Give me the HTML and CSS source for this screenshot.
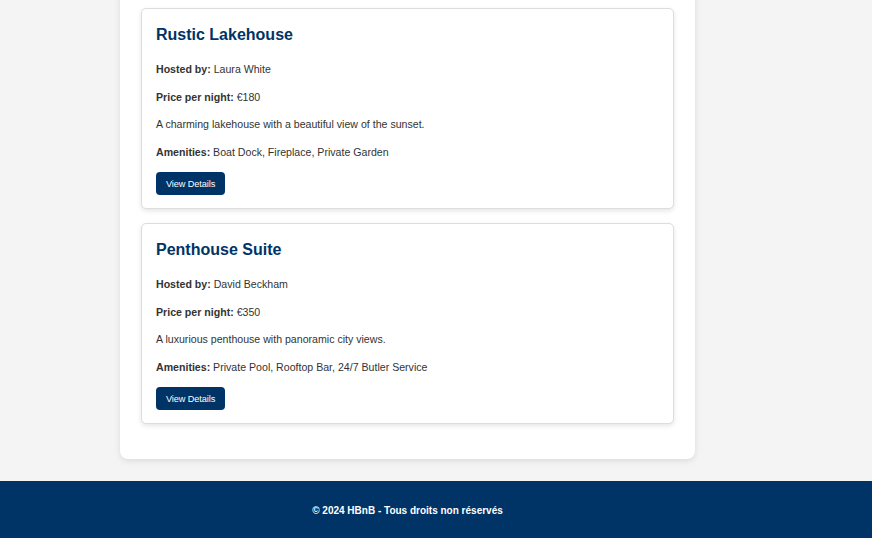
FILE: index.html
```html
<!DOCTYPE html>
<html lang="fr">
<head>
<meta charset="utf-8">
<title>HBnB - Places</title>
<link rel="stylesheet" href="styles.css">
</head>
<body>
<div class="page">
  <main class="places">
    <article class="place-card">
      <h2 class="place-title">Rustic Lakehouse</h2>
      <p><strong>Hosted by:</strong> Laura White</p>
      <p><strong>Price per night:</strong> €180</p>
      <p>A charming lakehouse with a beautiful view of the sunset.</p>
      <p><strong>Amenities:</strong> Boat Dock, Fireplace, Private Garden</p>
      <button class="details-button">View Details</button>
    </article>
    <article class="place-card">
      <h2 class="place-title">Penthouse Suite</h2>
      <p><strong>Hosted by:</strong> David Beckham</p>
      <p><strong>Price per night:</strong> €350</p>
      <p>A luxurious penthouse with panoramic city views.</p>
      <p><strong>Amenities:</strong> Private Pool, Rooftop Bar, 24/7 Butler Service</p>
      <button class="details-button">View Details</button>
    </article>
  </main>
</div>
<footer class="site-footer">
  <div class="footer-inner">© 2024 HBnB - Tous droits non réservés</div>
</footer>
</body>
</html>
```
FILE: styles.css
```css
html, body {
  margin: 0;
  padding: 0;
}
body {
  background: #f4f4f4;
  font-family: "Liberation Sans", Arial, sans-serif;
  color: #333;
}
.page {
  width: 815px;
}
.places {
  width: 575px;
  box-sizing: border-box;
  margin: -12px auto 22px;
  padding: 20px 21px 21px;
  background: #fff;
  border-radius: 8px;
  box-shadow: 0 2px 6px rgba(0, 0, 0, 0.1);
}
.place-card {
  border: 1px solid #ddd;
  border-radius: 5px;
  background: #fff;
  box-shadow: 0 2px 5px rgba(0, 0, 0, 0.1);
  padding: 16px 14px 13px;
  margin-bottom: 14px;
}
.place-title {
  margin: 0 0 19px;
  font-size: 16px;
  line-height: 19px;
  color: #003366;
  font-weight: bold;
}
.place-card p {
  margin: 0 0 14px;
  font-size: 10.6px;
  line-height: 13.5px;
}
.place-card p:last-of-type {
  margin-bottom: 13px;
}
.details-button {
  display: block;
  height: 23px;
  padding: 0 10px;
  border: none;
  border-radius: 4px;
  background: #003366;
  color: #fff;
  font-family: "Liberation Sans", Arial, sans-serif;
  font-size: 9.2px;
  letter-spacing: -0.1px;
  cursor: pointer;
}
.site-footer {
  background: #003366;
  color: #fff;
  padding: 24px 0 22px;
}
.footer-inner {
  width: 815px;
  text-align: center;
  font-size: 10px;
  line-height: 12px;
  font-weight: bold;
}
```
